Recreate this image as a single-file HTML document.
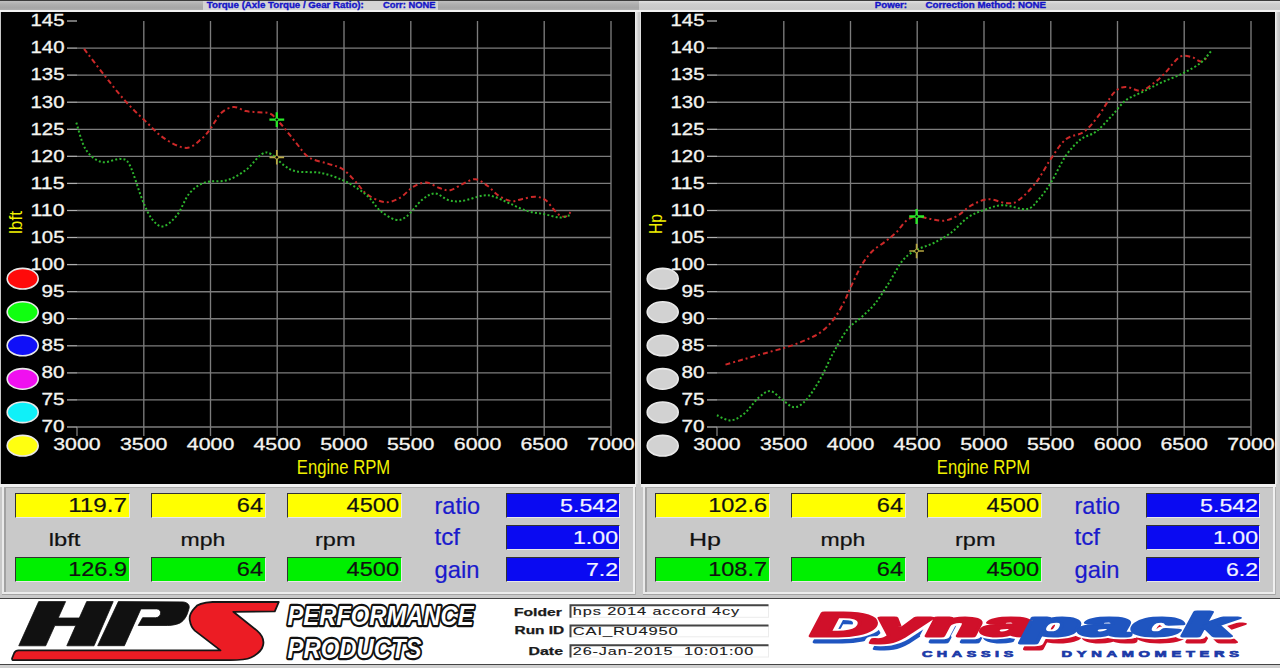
<!DOCTYPE html>
<html><head><meta charset="utf-8"><style>
*{margin:0;padding:0;box-sizing:border-box}
html,body{width:1280px;height:668px;overflow:hidden;background:#c8c8c8;font-family:"Liberation Sans",sans-serif}
.abs{position:absolute}
.pan{position:absolute;top:484px;width:638px;height:114px;background:#cbcbcb;border-top:2px solid #f4f4f4;border-left:2px solid #f0f0f0;}
.pan::before{content:"";position:absolute;left:1px;top:1px;right:3px;bottom:3px;border:1px solid #9c9c9c;border-right-color:#f4f4f4;border-bottom-color:#f4f4f4}
.box{position:absolute;width:115px;height:25px;border-top:1px solid #333;border-left:1px solid #333;border-right:1px solid #e8e8e8;border-bottom:1px solid #e8e8e8}
.yel{background:#ffff00}
.grn{background:#00f000}
.blu{background:#0a0af2;border-top:1px solid #333;border-left:1px solid #333;border-right:1px solid #e8e8e8;border-bottom:1px solid #e8e8e8;position:absolute;width:114px;height:25px}
</style></head><body>
<div class="abs" style="left:0;top:0;width:1280px;height:668px">
<!-- top bar -->
<div class="abs" style="left:0;top:0;width:1280px;height:1px;background:#3c3c3c"></div>
<div class="abs" style="left:0;top:1px;width:639px;height:10px;background:linear-gradient(#c0c0c0,#b0b0b0 30%,#a6a6a6 70%,#b4b4b4)"></div>
<div class="abs" style="left:639px;top:1px;width:641px;height:10px;background:linear-gradient(#e0e0e0,#cdcdcd 30%,#c8c8c8 80%,#d0d0d0)"></div>
<div class="abs" style="left:203px;top:1px;width:235px;height:10px;background:#d4d4d4"></div>
<div class="abs" style="left:0;top:10px;width:1280px;height:2px;background:#f2f2f2"></div>
<!-- chart frame -->
<div class="abs" style="left:0;top:12px;width:1px;height:472px;background:#c8c8c8"></div>
<div class="abs" style="left:635px;top:12px;width:6px;height:472px;background:linear-gradient(90deg,#f0f0f0,#d8d8d8 40%,#c4c4c4 70%,#e8e8e8)"></div>
<div class="abs" style="left:1275px;top:12px;width:5px;height:472px;background:linear-gradient(90deg,#f4f4f4,#d0d0d0 50%,#c0c0c0)"></div>
<div class="abs" style="left:0px;top:484px;width:641px;height:114px;background:#c9c9c9"></div>
<div class="abs" style="left:0px;top:484px;width:636px;height:3px;background:#f0f0f0"></div>
<div class="abs" style="left:2px;top:487px;width:2px;height:107px;background:#ebebeb"></div>
<div class="abs" style="left:4px;top:487px;width:2px;height:105px;background:#a2a2a2"></div>
<div class="abs" style="left:4px;top:487px;width:630px;height:1px;background:#ababab"></div>
<div class="abs" style="left:4px;top:592px;width:630px;height:2px;background:#ececec"></div>
<div class="abs" style="left:2px;top:594px;width:634px;height:1px;background:#a4a4a4"></div>
<div class="abs" style="left:633px;top:487px;width:2px;height:107px;background:#f0f0f0"></div>
<div class="abs" style="left:635px;top:487px;width:1px;height:108px;background:#b0b0b0"></div>
<div class="box yel" style="left:15px;top:493px"></div>
<div class="box grn" style="left:15px;top:557px"></div>
<div class="box yel" style="left:151px;top:493px"></div>
<div class="box grn" style="left:151px;top:557px"></div>
<div class="box yel" style="left:287px;top:493px"></div>
<div class="box grn" style="left:287px;top:557px"></div>
<div class="abs" style="left:640px;top:484px;width:640px;height:114px;background:#c9c9c9"></div>
<div class="abs" style="left:641px;top:484px;width:635px;height:3px;background:#f0f0f0"></div>
<div class="abs" style="left:643px;top:487px;width:2px;height:107px;background:#ebebeb"></div>
<div class="abs" style="left:645px;top:487px;width:2px;height:105px;background:#a2a2a2"></div>
<div class="abs" style="left:645px;top:487px;width:629px;height:1px;background:#ababab"></div>
<div class="abs" style="left:645px;top:592px;width:629px;height:2px;background:#ececec"></div>
<div class="abs" style="left:643px;top:594px;width:633px;height:1px;background:#a4a4a4"></div>
<div class="abs" style="left:1273px;top:487px;width:2px;height:107px;background:#f0f0f0"></div>
<div class="abs" style="left:1275px;top:487px;width:1px;height:108px;background:#b0b0b0"></div>
<div class="box yel" style="left:655px;top:493px"></div>
<div class="box grn" style="left:655px;top:557px"></div>
<div class="box yel" style="left:791px;top:493px"></div>
<div class="box grn" style="left:791px;top:557px"></div>
<div class="box yel" style="left:927px;top:493px"></div>
<div class="box grn" style="left:927px;top:557px"></div>
<div class="blu" style="left:506px;top:493px"></div>
<div class="blu" style="left:506px;top:525px"></div>
<div class="blu" style="left:506px;top:557px"></div>
<div class="blu" style="left:1146px;top:493px"></div>
<div class="blu" style="left:1146px;top:525px"></div>
<div class="blu" style="left:1146px;top:557px"></div>
<!-- bottom strip -->
<div class="abs" style="left:0;top:598px;width:1280px;height:1px;background:#444"></div>
<div class="abs" style="left:0;top:599px;width:1280px;height:65px;background:#fff"></div>
<div class="abs" style="left:0;top:664px;width:1280px;height:1px;background:#444"></div>
<div class="abs" style="left:0;top:665px;width:1280px;height:3px;background:#d0d0d0"></div>
</div>
<svg class="abs" style="left:0;top:0" width="1280" height="668" viewBox="0 0 1280 668">
<text x="206.8" y="8" font-family="Liberation Sans, sans-serif" font-size="9" font-weight="bold" fill="#1414c8" stroke="#1414c8" stroke-width="0.35" textLength="157" lengthAdjust="spacingAndGlyphs">Torque (Axle Torque / Gear Ratio):</text>
<text x="383" y="8" font-family="Liberation Sans, sans-serif" font-size="9" font-weight="bold" fill="#1414c8" stroke="#1414c8" stroke-width="0.35" textLength="52.4" lengthAdjust="spacingAndGlyphs">Corr: NONE</text>
<text x="874.8" y="8" font-family="Liberation Sans, sans-serif" font-size="9" font-weight="bold" fill="#1414c8" stroke="#1414c8" stroke-width="0.35" textLength="32.2" lengthAdjust="spacingAndGlyphs">Power:</text>
<text x="925.6" y="8" font-family="Liberation Sans, sans-serif" font-size="9" font-weight="bold" fill="#1414c8" stroke="#1414c8" stroke-width="0.35" textLength="120.4" lengthAdjust="spacingAndGlyphs">Correction Method: NONE</text>
<rect x="1" y="12" width="634" height="472" fill="#000"/>
<line x1="77" y1="427.0" x2="611.0" y2="427.0" stroke="#7c7c7c" stroke-width="1.35"/>
<line x1="77" y1="399.9" x2="611.0" y2="399.9" stroke="#7c7c7c" stroke-width="1.35"/>
<line x1="77" y1="372.9" x2="611.0" y2="372.9" stroke="#7c7c7c" stroke-width="1.35"/>
<line x1="77" y1="345.8" x2="611.0" y2="345.8" stroke="#7c7c7c" stroke-width="1.35"/>
<line x1="77" y1="318.7" x2="611.0" y2="318.7" stroke="#7c7c7c" stroke-width="1.35"/>
<line x1="77" y1="291.7" x2="611.0" y2="291.7" stroke="#7c7c7c" stroke-width="1.35"/>
<line x1="77" y1="264.6" x2="611.0" y2="264.6" stroke="#7c7c7c" stroke-width="1.35"/>
<line x1="77" y1="237.5" x2="611.0" y2="237.5" stroke="#7c7c7c" stroke-width="1.35"/>
<line x1="77" y1="210.5" x2="611.0" y2="210.5" stroke="#7c7c7c" stroke-width="1.35"/>
<line x1="77" y1="183.4" x2="611.0" y2="183.4" stroke="#7c7c7c" stroke-width="1.35"/>
<line x1="77" y1="156.3" x2="611.0" y2="156.3" stroke="#7c7c7c" stroke-width="1.35"/>
<line x1="77" y1="129.3" x2="611.0" y2="129.3" stroke="#7c7c7c" stroke-width="1.35"/>
<line x1="77" y1="102.2" x2="611.0" y2="102.2" stroke="#7c7c7c" stroke-width="1.35"/>
<line x1="77" y1="75.1" x2="611.0" y2="75.1" stroke="#7c7c7c" stroke-width="1.35"/>
<line x1="77" y1="48.1" x2="611.0" y2="48.1" stroke="#7c7c7c" stroke-width="1.35"/>
<line x1="143.8" y1="21.0" x2="143.8" y2="436.0" stroke="#7c7c7c" stroke-width="1.35"/>
<line x1="210.5" y1="21.0" x2="210.5" y2="436.0" stroke="#7c7c7c" stroke-width="1.35"/>
<line x1="277.2" y1="21.0" x2="277.2" y2="436.0" stroke="#7c7c7c" stroke-width="1.35"/>
<line x1="344.0" y1="21.0" x2="344.0" y2="436.0" stroke="#7c7c7c" stroke-width="1.35"/>
<line x1="410.8" y1="21.0" x2="410.8" y2="436.0" stroke="#7c7c7c" stroke-width="1.35"/>
<line x1="477.5" y1="21.0" x2="477.5" y2="436.0" stroke="#7c7c7c" stroke-width="1.35"/>
<line x1="544.2" y1="21.0" x2="544.2" y2="436.0" stroke="#7c7c7c" stroke-width="1.35"/>
<line x1="611.0" y1="21.0" x2="611.0" y2="436.0" stroke="#7c7c7c" stroke-width="1.35"/>
<line x1="77" y1="427" x2="77" y2="436.0" stroke="#7c7c7c" stroke-width="1.35"/>
<line x1="67" y1="427.0" x2="77" y2="427.0" stroke="#b0b0b0" stroke-width="1.3"/>
<text x="41.5" y="432.3" font-family="Liberation Sans, sans-serif" font-size="15.6" fill="#f4f4f0" stroke="#f4f4f0" stroke-width="0.3" textLength="23" lengthAdjust="spacingAndGlyphs">70</text>
<line x1="67" y1="399.9" x2="77" y2="399.9" stroke="#b0b0b0" stroke-width="1.3"/>
<text x="41.5" y="405.2" font-family="Liberation Sans, sans-serif" font-size="15.6" fill="#f4f4f0" stroke="#f4f4f0" stroke-width="0.3" textLength="23" lengthAdjust="spacingAndGlyphs">75</text>
<line x1="67" y1="372.9" x2="77" y2="372.9" stroke="#b0b0b0" stroke-width="1.3"/>
<text x="41.5" y="378.2" font-family="Liberation Sans, sans-serif" font-size="15.6" fill="#f4f4f0" stroke="#f4f4f0" stroke-width="0.3" textLength="23" lengthAdjust="spacingAndGlyphs">80</text>
<line x1="67" y1="345.8" x2="77" y2="345.8" stroke="#b0b0b0" stroke-width="1.3"/>
<text x="41.5" y="351.1" font-family="Liberation Sans, sans-serif" font-size="15.6" fill="#f4f4f0" stroke="#f4f4f0" stroke-width="0.3" textLength="23" lengthAdjust="spacingAndGlyphs">85</text>
<line x1="67" y1="318.7" x2="77" y2="318.7" stroke="#b0b0b0" stroke-width="1.3"/>
<text x="41.5" y="324.0" font-family="Liberation Sans, sans-serif" font-size="15.6" fill="#f4f4f0" stroke="#f4f4f0" stroke-width="0.3" textLength="23" lengthAdjust="spacingAndGlyphs">90</text>
<line x1="67" y1="291.7" x2="77" y2="291.7" stroke="#b0b0b0" stroke-width="1.3"/>
<text x="41.5" y="297.0" font-family="Liberation Sans, sans-serif" font-size="15.6" fill="#f4f4f0" stroke="#f4f4f0" stroke-width="0.3" textLength="23" lengthAdjust="spacingAndGlyphs">95</text>
<line x1="67" y1="264.6" x2="77" y2="264.6" stroke="#b0b0b0" stroke-width="1.3"/>
<text x="30.5" y="269.9" font-family="Liberation Sans, sans-serif" font-size="15.6" fill="#f4f4f0" stroke="#f4f4f0" stroke-width="0.3" textLength="34" lengthAdjust="spacingAndGlyphs">100</text>
<line x1="67" y1="237.5" x2="77" y2="237.5" stroke="#b0b0b0" stroke-width="1.3"/>
<text x="30.5" y="242.8" font-family="Liberation Sans, sans-serif" font-size="15.6" fill="#f4f4f0" stroke="#f4f4f0" stroke-width="0.3" textLength="34" lengthAdjust="spacingAndGlyphs">105</text>
<line x1="67" y1="210.5" x2="77" y2="210.5" stroke="#b0b0b0" stroke-width="1.3"/>
<text x="30.5" y="215.8" font-family="Liberation Sans, sans-serif" font-size="15.6" fill="#f4f4f0" stroke="#f4f4f0" stroke-width="0.3" textLength="34" lengthAdjust="spacingAndGlyphs">110</text>
<line x1="67" y1="183.4" x2="77" y2="183.4" stroke="#b0b0b0" stroke-width="1.3"/>
<text x="30.5" y="188.7" font-family="Liberation Sans, sans-serif" font-size="15.6" fill="#f4f4f0" stroke="#f4f4f0" stroke-width="0.3" textLength="34" lengthAdjust="spacingAndGlyphs">115</text>
<line x1="67" y1="156.3" x2="77" y2="156.3" stroke="#b0b0b0" stroke-width="1.3"/>
<text x="30.5" y="161.6" font-family="Liberation Sans, sans-serif" font-size="15.6" fill="#f4f4f0" stroke="#f4f4f0" stroke-width="0.3" textLength="34" lengthAdjust="spacingAndGlyphs">120</text>
<line x1="67" y1="129.3" x2="77" y2="129.3" stroke="#b0b0b0" stroke-width="1.3"/>
<text x="30.5" y="134.6" font-family="Liberation Sans, sans-serif" font-size="15.6" fill="#f4f4f0" stroke="#f4f4f0" stroke-width="0.3" textLength="34" lengthAdjust="spacingAndGlyphs">125</text>
<line x1="67" y1="102.2" x2="77" y2="102.2" stroke="#b0b0b0" stroke-width="1.3"/>
<text x="30.5" y="107.5" font-family="Liberation Sans, sans-serif" font-size="15.6" fill="#f4f4f0" stroke="#f4f4f0" stroke-width="0.3" textLength="34" lengthAdjust="spacingAndGlyphs">130</text>
<line x1="67" y1="75.1" x2="77" y2="75.1" stroke="#b0b0b0" stroke-width="1.3"/>
<text x="30.5" y="80.4" font-family="Liberation Sans, sans-serif" font-size="15.6" fill="#f4f4f0" stroke="#f4f4f0" stroke-width="0.3" textLength="34" lengthAdjust="spacingAndGlyphs">135</text>
<line x1="67" y1="48.1" x2="77" y2="48.1" stroke="#b0b0b0" stroke-width="1.3"/>
<text x="30.5" y="53.4" font-family="Liberation Sans, sans-serif" font-size="15.6" fill="#f4f4f0" stroke="#f4f4f0" stroke-width="0.3" textLength="34" lengthAdjust="spacingAndGlyphs">140</text>
<line x1="67" y1="21.0" x2="77" y2="21.0" stroke="#b0b0b0" stroke-width="1.3"/>
<text x="30.5" y="26.3" font-family="Liberation Sans, sans-serif" font-size="15.6" fill="#f4f4f0" stroke="#f4f4f0" stroke-width="0.3" textLength="34" lengthAdjust="spacingAndGlyphs">145</text>
<text x="53.2" y="449.7" font-family="Liberation Sans, sans-serif" font-size="16.6" fill="#f4f4f0" stroke="#f4f4f0" stroke-width="0.3" textLength="47.5" lengthAdjust="spacingAndGlyphs">3000</text>
<text x="120.0" y="449.7" font-family="Liberation Sans, sans-serif" font-size="16.6" fill="#f4f4f0" stroke="#f4f4f0" stroke-width="0.3" textLength="47.5" lengthAdjust="spacingAndGlyphs">3500</text>
<text x="186.8" y="449.7" font-family="Liberation Sans, sans-serif" font-size="16.6" fill="#f4f4f0" stroke="#f4f4f0" stroke-width="0.3" textLength="47.5" lengthAdjust="spacingAndGlyphs">4000</text>
<text x="253.5" y="449.7" font-family="Liberation Sans, sans-serif" font-size="16.6" fill="#f4f4f0" stroke="#f4f4f0" stroke-width="0.3" textLength="47.5" lengthAdjust="spacingAndGlyphs">4500</text>
<text x="320.2" y="449.7" font-family="Liberation Sans, sans-serif" font-size="16.6" fill="#f4f4f0" stroke="#f4f4f0" stroke-width="0.3" textLength="47.5" lengthAdjust="spacingAndGlyphs">5000</text>
<text x="387.0" y="449.7" font-family="Liberation Sans, sans-serif" font-size="16.6" fill="#f4f4f0" stroke="#f4f4f0" stroke-width="0.3" textLength="47.5" lengthAdjust="spacingAndGlyphs">5500</text>
<text x="453.8" y="449.7" font-family="Liberation Sans, sans-serif" font-size="16.6" fill="#f4f4f0" stroke="#f4f4f0" stroke-width="0.3" textLength="47.5" lengthAdjust="spacingAndGlyphs">6000</text>
<text x="520.5" y="449.7" font-family="Liberation Sans, sans-serif" font-size="16.6" fill="#f4f4f0" stroke="#f4f4f0" stroke-width="0.3" textLength="47.5" lengthAdjust="spacingAndGlyphs">6500</text>
<text x="587.2" y="449.7" font-family="Liberation Sans, sans-serif" font-size="16.6" fill="#f4f4f0" stroke="#f4f4f0" stroke-width="0.3" textLength="47.5" lengthAdjust="spacingAndGlyphs">7000</text>
<text x="296.8" y="474.4" font-family="Liberation Sans, sans-serif" font-size="19.6" fill="#f0f000" textLength="93.4" lengthAdjust="spacingAndGlyphs">Engine RPM</text>
<text transform="translate(22,234) rotate(-90)" x="0" y="0" font-family="Liberation Sans, sans-serif" font-size="18" fill="#f0f000" textLength="23" lengthAdjust="spacingAndGlyphs">lbft</text>
<path d="M84.1,48.9 C87.5,53.3 97.8,67.0 104.6,75.6 C111.4,84.2 118.2,93.1 125.0,100.7 C131.8,108.3 138.8,114.8 145.4,121.1 C152.0,127.4 157.5,133.9 164.3,138.4 C171.1,142.9 180.0,147.9 186.3,147.9 C192.6,147.9 197.8,141.8 202.0,138.4 C206.2,135.0 208.3,131.6 211.4,127.4 C214.5,123.2 217.1,116.7 220.8,113.3 C224.5,109.9 229.2,107.4 233.4,107.0 C237.6,106.6 241.8,110.2 246.0,111.1 C250.2,112.0 254.4,111.8 258.6,112.3 C262.8,112.8 266.9,111.7 271.1,114.2 C275.3,116.7 279.5,122.6 283.7,127.4 C287.9,132.2 292.1,138.1 296.3,143.1 C300.5,148.1 303.6,153.9 308.8,157.3 C314.0,160.7 322.0,161.6 327.7,163.6 C333.4,165.6 338.3,166.2 343.1,169.4 C347.9,172.6 352.3,178.3 356.3,182.5 C360.3,186.7 362.5,191.2 367.2,194.5 C371.9,197.8 379.2,201.6 384.7,202.2 C390.2,202.8 395.3,200.4 400.0,197.8 C404.7,195.2 408.7,189.5 413.1,186.9 C417.5,184.3 421.9,182.3 426.3,182.5 C430.7,182.7 435.4,186.7 439.4,188.0 C443.4,189.3 446.3,190.9 450.3,190.2 C454.3,189.5 459.2,185.4 463.4,183.6 C467.6,181.8 471.5,178.8 475.5,179.2 C479.5,179.6 483.7,183.1 487.5,185.8 C491.3,188.5 494.5,193.1 498.5,195.6 C502.5,198.1 507.6,200.5 511.6,201.1 C515.6,201.7 518.5,199.6 522.5,198.9 C526.5,198.2 531.8,196.5 535.6,196.7 C539.4,196.9 542.6,198.0 545.5,200.0 C548.4,202.0 550.7,206.2 553.1,208.8 C555.5,211.4 557.5,214.0 559.7,215.3 C561.9,216.6 564.5,217.0 566.3,216.4 C568.1,215.8 569.9,212.7 570.6,212.0" fill="none" stroke="#cc2828" stroke-width="2" stroke-dasharray="5 3 2 3"/>
<path d="M76.3,122.7 C77.9,127.2 81.5,142.8 85.7,149.4 C89.9,156.0 95.6,160.4 101.4,162.0 C107.2,163.6 115.6,158.4 120.3,158.9 C125.0,159.4 126.0,158.3 129.7,165.1 C133.4,171.9 138.6,190.8 142.3,199.7 C146.0,208.6 148.3,214.1 151.7,218.6 C155.1,223.1 158.5,226.9 162.7,226.4 C166.9,225.9 172.4,220.9 176.9,215.4 C181.4,209.9 184.7,198.9 189.4,193.4 C194.1,187.9 198.8,184.6 205.1,182.4 C211.4,180.2 220.3,182.3 227.1,180.2 C233.9,178.1 240.2,174.2 246.0,169.9 C251.8,165.6 257.5,156.7 261.7,154.1 C265.9,151.5 267.4,152.3 271.1,154.1 C274.8,155.9 279.5,162.2 283.7,165.1 C287.9,168.0 290.0,170.1 296.3,171.4 C302.6,172.7 313.6,171.5 321.4,173.0 C329.2,174.5 336.9,177.6 343.1,180.3 C349.3,183.0 354.0,186.2 358.4,189.1 C362.8,192.0 365.8,194.2 369.4,197.8 C373.0,201.4 375.9,207.2 380.3,210.9 C384.7,214.6 391.2,218.8 395.6,219.7 C400.0,220.6 402.2,219.7 406.6,216.4 C411.0,213.1 417.2,203.8 421.9,200.0 C426.6,196.2 430.6,193.4 435.0,193.4 C439.4,193.4 443.7,198.7 448.1,200.0 C452.5,201.3 455.5,201.8 461.3,201.1 C467.1,200.4 477.6,196.3 483.1,195.6 C488.6,194.9 489.7,195.4 494.1,196.7 C498.5,198.0 503.9,200.9 509.4,203.3 C514.9,205.7 521.1,209.1 526.9,210.9 C532.7,212.7 538.9,213.1 544.4,214.2 C549.9,215.3 555.5,217.3 559.7,217.5 C563.9,217.7 568.0,215.7 569.6,215.3" fill="none" stroke="#2cb42c" stroke-width="2" stroke-dasharray="2 2.2"/>
<path d="M269.40000000000003,119.6H284.2M276.8,112.19999999999999V127.0" stroke="#28e828" stroke-width="2.3"/>
<path d="M269.5,157.3H284.1M276.8,150.0V164.60000000000002" stroke="#b8a840" stroke-width="1.7"/>
<circle cx="276.8" cy="157.3" r="1.8" fill="#000" stroke="#b8a840" stroke-width="1"/>
<circle cx="276.8" cy="119.6" r="1.6" fill="#000" stroke="#30e030" stroke-width="1"/>
<rect x="641" y="12" width="634" height="472" fill="#000"/>
<line x1="717" y1="427.0" x2="1251.0" y2="427.0" stroke="#7c7c7c" stroke-width="1.35"/>
<line x1="717" y1="399.9" x2="1251.0" y2="399.9" stroke="#7c7c7c" stroke-width="1.35"/>
<line x1="717" y1="372.9" x2="1251.0" y2="372.9" stroke="#7c7c7c" stroke-width="1.35"/>
<line x1="717" y1="345.8" x2="1251.0" y2="345.8" stroke="#7c7c7c" stroke-width="1.35"/>
<line x1="717" y1="318.7" x2="1251.0" y2="318.7" stroke="#7c7c7c" stroke-width="1.35"/>
<line x1="717" y1="291.7" x2="1251.0" y2="291.7" stroke="#7c7c7c" stroke-width="1.35"/>
<line x1="717" y1="264.6" x2="1251.0" y2="264.6" stroke="#7c7c7c" stroke-width="1.35"/>
<line x1="717" y1="237.5" x2="1251.0" y2="237.5" stroke="#7c7c7c" stroke-width="1.35"/>
<line x1="717" y1="210.5" x2="1251.0" y2="210.5" stroke="#7c7c7c" stroke-width="1.35"/>
<line x1="717" y1="183.4" x2="1251.0" y2="183.4" stroke="#7c7c7c" stroke-width="1.35"/>
<line x1="717" y1="156.3" x2="1251.0" y2="156.3" stroke="#7c7c7c" stroke-width="1.35"/>
<line x1="717" y1="129.3" x2="1251.0" y2="129.3" stroke="#7c7c7c" stroke-width="1.35"/>
<line x1="717" y1="102.2" x2="1251.0" y2="102.2" stroke="#7c7c7c" stroke-width="1.35"/>
<line x1="717" y1="75.1" x2="1251.0" y2="75.1" stroke="#7c7c7c" stroke-width="1.35"/>
<line x1="717" y1="48.1" x2="1251.0" y2="48.1" stroke="#7c7c7c" stroke-width="1.35"/>
<line x1="783.8" y1="21.0" x2="783.8" y2="436.0" stroke="#7c7c7c" stroke-width="1.35"/>
<line x1="850.5" y1="21.0" x2="850.5" y2="436.0" stroke="#7c7c7c" stroke-width="1.35"/>
<line x1="917.2" y1="21.0" x2="917.2" y2="436.0" stroke="#7c7c7c" stroke-width="1.35"/>
<line x1="984.0" y1="21.0" x2="984.0" y2="436.0" stroke="#7c7c7c" stroke-width="1.35"/>
<line x1="1050.8" y1="21.0" x2="1050.8" y2="436.0" stroke="#7c7c7c" stroke-width="1.35"/>
<line x1="1117.5" y1="21.0" x2="1117.5" y2="436.0" stroke="#7c7c7c" stroke-width="1.35"/>
<line x1="1184.2" y1="21.0" x2="1184.2" y2="436.0" stroke="#7c7c7c" stroke-width="1.35"/>
<line x1="1251.0" y1="21.0" x2="1251.0" y2="436.0" stroke="#7c7c7c" stroke-width="1.35"/>
<line x1="717" y1="427" x2="717" y2="436.0" stroke="#7c7c7c" stroke-width="1.35"/>
<line x1="707" y1="427.0" x2="717" y2="427.0" stroke="#b0b0b0" stroke-width="1.3"/>
<text x="681.5" y="432.3" font-family="Liberation Sans, sans-serif" font-size="15.6" fill="#f4f4f0" stroke="#f4f4f0" stroke-width="0.3" textLength="23" lengthAdjust="spacingAndGlyphs">70</text>
<line x1="707" y1="399.9" x2="717" y2="399.9" stroke="#b0b0b0" stroke-width="1.3"/>
<text x="681.5" y="405.2" font-family="Liberation Sans, sans-serif" font-size="15.6" fill="#f4f4f0" stroke="#f4f4f0" stroke-width="0.3" textLength="23" lengthAdjust="spacingAndGlyphs">75</text>
<line x1="707" y1="372.9" x2="717" y2="372.9" stroke="#b0b0b0" stroke-width="1.3"/>
<text x="681.5" y="378.2" font-family="Liberation Sans, sans-serif" font-size="15.6" fill="#f4f4f0" stroke="#f4f4f0" stroke-width="0.3" textLength="23" lengthAdjust="spacingAndGlyphs">80</text>
<line x1="707" y1="345.8" x2="717" y2="345.8" stroke="#b0b0b0" stroke-width="1.3"/>
<text x="681.5" y="351.1" font-family="Liberation Sans, sans-serif" font-size="15.6" fill="#f4f4f0" stroke="#f4f4f0" stroke-width="0.3" textLength="23" lengthAdjust="spacingAndGlyphs">85</text>
<line x1="707" y1="318.7" x2="717" y2="318.7" stroke="#b0b0b0" stroke-width="1.3"/>
<text x="681.5" y="324.0" font-family="Liberation Sans, sans-serif" font-size="15.6" fill="#f4f4f0" stroke="#f4f4f0" stroke-width="0.3" textLength="23" lengthAdjust="spacingAndGlyphs">90</text>
<line x1="707" y1="291.7" x2="717" y2="291.7" stroke="#b0b0b0" stroke-width="1.3"/>
<text x="681.5" y="297.0" font-family="Liberation Sans, sans-serif" font-size="15.6" fill="#f4f4f0" stroke="#f4f4f0" stroke-width="0.3" textLength="23" lengthAdjust="spacingAndGlyphs">95</text>
<line x1="707" y1="264.6" x2="717" y2="264.6" stroke="#b0b0b0" stroke-width="1.3"/>
<text x="670.5" y="269.9" font-family="Liberation Sans, sans-serif" font-size="15.6" fill="#f4f4f0" stroke="#f4f4f0" stroke-width="0.3" textLength="34" lengthAdjust="spacingAndGlyphs">100</text>
<line x1="707" y1="237.5" x2="717" y2="237.5" stroke="#b0b0b0" stroke-width="1.3"/>
<text x="670.5" y="242.8" font-family="Liberation Sans, sans-serif" font-size="15.6" fill="#f4f4f0" stroke="#f4f4f0" stroke-width="0.3" textLength="34" lengthAdjust="spacingAndGlyphs">105</text>
<line x1="707" y1="210.5" x2="717" y2="210.5" stroke="#b0b0b0" stroke-width="1.3"/>
<text x="670.5" y="215.8" font-family="Liberation Sans, sans-serif" font-size="15.6" fill="#f4f4f0" stroke="#f4f4f0" stroke-width="0.3" textLength="34" lengthAdjust="spacingAndGlyphs">110</text>
<line x1="707" y1="183.4" x2="717" y2="183.4" stroke="#b0b0b0" stroke-width="1.3"/>
<text x="670.5" y="188.7" font-family="Liberation Sans, sans-serif" font-size="15.6" fill="#f4f4f0" stroke="#f4f4f0" stroke-width="0.3" textLength="34" lengthAdjust="spacingAndGlyphs">115</text>
<line x1="707" y1="156.3" x2="717" y2="156.3" stroke="#b0b0b0" stroke-width="1.3"/>
<text x="670.5" y="161.6" font-family="Liberation Sans, sans-serif" font-size="15.6" fill="#f4f4f0" stroke="#f4f4f0" stroke-width="0.3" textLength="34" lengthAdjust="spacingAndGlyphs">120</text>
<line x1="707" y1="129.3" x2="717" y2="129.3" stroke="#b0b0b0" stroke-width="1.3"/>
<text x="670.5" y="134.6" font-family="Liberation Sans, sans-serif" font-size="15.6" fill="#f4f4f0" stroke="#f4f4f0" stroke-width="0.3" textLength="34" lengthAdjust="spacingAndGlyphs">125</text>
<line x1="707" y1="102.2" x2="717" y2="102.2" stroke="#b0b0b0" stroke-width="1.3"/>
<text x="670.5" y="107.5" font-family="Liberation Sans, sans-serif" font-size="15.6" fill="#f4f4f0" stroke="#f4f4f0" stroke-width="0.3" textLength="34" lengthAdjust="spacingAndGlyphs">130</text>
<line x1="707" y1="75.1" x2="717" y2="75.1" stroke="#b0b0b0" stroke-width="1.3"/>
<text x="670.5" y="80.4" font-family="Liberation Sans, sans-serif" font-size="15.6" fill="#f4f4f0" stroke="#f4f4f0" stroke-width="0.3" textLength="34" lengthAdjust="spacingAndGlyphs">135</text>
<line x1="707" y1="48.1" x2="717" y2="48.1" stroke="#b0b0b0" stroke-width="1.3"/>
<text x="670.5" y="53.4" font-family="Liberation Sans, sans-serif" font-size="15.6" fill="#f4f4f0" stroke="#f4f4f0" stroke-width="0.3" textLength="34" lengthAdjust="spacingAndGlyphs">140</text>
<line x1="707" y1="21.0" x2="717" y2="21.0" stroke="#b0b0b0" stroke-width="1.3"/>
<text x="670.5" y="26.3" font-family="Liberation Sans, sans-serif" font-size="15.6" fill="#f4f4f0" stroke="#f4f4f0" stroke-width="0.3" textLength="34" lengthAdjust="spacingAndGlyphs">145</text>
<text x="693.2" y="449.7" font-family="Liberation Sans, sans-serif" font-size="16.6" fill="#f4f4f0" stroke="#f4f4f0" stroke-width="0.3" textLength="47.5" lengthAdjust="spacingAndGlyphs">3000</text>
<text x="760.0" y="449.7" font-family="Liberation Sans, sans-serif" font-size="16.6" fill="#f4f4f0" stroke="#f4f4f0" stroke-width="0.3" textLength="47.5" lengthAdjust="spacingAndGlyphs">3500</text>
<text x="826.8" y="449.7" font-family="Liberation Sans, sans-serif" font-size="16.6" fill="#f4f4f0" stroke="#f4f4f0" stroke-width="0.3" textLength="47.5" lengthAdjust="spacingAndGlyphs">4000</text>
<text x="893.5" y="449.7" font-family="Liberation Sans, sans-serif" font-size="16.6" fill="#f4f4f0" stroke="#f4f4f0" stroke-width="0.3" textLength="47.5" lengthAdjust="spacingAndGlyphs">4500</text>
<text x="960.2" y="449.7" font-family="Liberation Sans, sans-serif" font-size="16.6" fill="#f4f4f0" stroke="#f4f4f0" stroke-width="0.3" textLength="47.5" lengthAdjust="spacingAndGlyphs">5000</text>
<text x="1027.0" y="449.7" font-family="Liberation Sans, sans-serif" font-size="16.6" fill="#f4f4f0" stroke="#f4f4f0" stroke-width="0.3" textLength="47.5" lengthAdjust="spacingAndGlyphs">5500</text>
<text x="1093.8" y="449.7" font-family="Liberation Sans, sans-serif" font-size="16.6" fill="#f4f4f0" stroke="#f4f4f0" stroke-width="0.3" textLength="47.5" lengthAdjust="spacingAndGlyphs">6000</text>
<text x="1160.5" y="449.7" font-family="Liberation Sans, sans-serif" font-size="16.6" fill="#f4f4f0" stroke="#f4f4f0" stroke-width="0.3" textLength="47.5" lengthAdjust="spacingAndGlyphs">6500</text>
<text x="1227.2" y="449.7" font-family="Liberation Sans, sans-serif" font-size="16.6" fill="#f4f4f0" stroke="#f4f4f0" stroke-width="0.3" textLength="47.5" lengthAdjust="spacingAndGlyphs">7000</text>
<text x="936.8" y="474.4" font-family="Liberation Sans, sans-serif" font-size="19.6" fill="#f0f000" textLength="93.4" lengthAdjust="spacingAndGlyphs">Engine RPM</text>
<text transform="translate(662,234) rotate(-90)" x="0" y="0" font-family="Liberation Sans, sans-serif" font-size="18" fill="#f0f000" textLength="20" lengthAdjust="spacingAndGlyphs">Hp</text>
<path d="M725.5,364.6 C728.6,363.7 737.8,361.0 744.4,359.1 C751.0,357.2 758.2,355.1 765.1,353.2 C772.0,351.2 779.5,349.4 785.8,347.4 C792.1,345.4 797.3,343.7 803.0,341.2 C808.7,338.7 815.0,336.3 820.2,332.6 C825.4,328.9 830.0,324.0 834.0,318.8 C838.0,313.6 841.4,307.1 844.3,301.6 C847.2,296.2 848.3,292.1 851.2,286.1 C854.1,280.1 858.1,271.1 861.5,265.4 C864.9,259.7 867.8,255.7 871.8,251.7 C875.8,247.7 881.6,244.5 885.6,241.3 C889.6,238.1 892.5,236.1 896.0,232.7 C899.5,229.3 902.9,223.4 906.3,220.7 C909.7,218.0 912.6,216.8 916.6,216.5 C920.6,216.2 925.8,218.2 930.4,218.9 C935.0,219.6 939.6,221.3 944.2,220.7 C948.8,220.1 953.3,218.1 957.9,215.5 C962.5,212.9 966.7,207.9 971.7,205.2 C976.7,202.5 982.3,199.5 988.0,199.2 C993.7,198.8 1000.9,202.8 1005.9,203.1 C1010.9,203.3 1012.9,204.1 1017.9,200.7 C1022.9,197.3 1030.4,189.7 1035.9,182.7 C1041.4,175.7 1045.9,166.0 1050.9,158.8 C1055.9,151.6 1060.3,143.8 1065.8,139.3 C1071.3,134.8 1078.3,135.8 1083.8,131.8 C1089.3,127.8 1093.8,121.9 1098.8,115.4 C1103.8,108.9 1109.3,97.7 1113.8,92.9 C1118.3,88.2 1121.2,87.2 1125.7,86.9 C1130.2,86.6 1136.2,91.3 1140.7,90.8 C1145.2,90.3 1148.7,86.8 1152.7,83.9 C1156.7,81.0 1160.2,77.9 1164.7,73.4 C1169.2,68.9 1175.1,59.7 1179.6,57.0 C1184.1,54.3 1188.1,56.3 1191.6,57.0 C1195.1,57.7 1197.8,61.4 1200.6,61.4 C1203.3,61.4 1206.8,57.7 1208.1,57.0" fill="none" stroke="#cc2828" stroke-width="2" stroke-dasharray="5 3 2 3"/>
<path d="M716.9,415.2 C719.2,416.1 726.1,420.7 730.7,420.4 C735.3,420.1 739.8,417.2 744.4,413.5 C749.0,409.8 753.9,401.7 758.2,398.0 C762.5,394.3 766.3,390.8 770.3,391.1 C774.3,391.4 778.3,397.0 782.3,399.7 C786.3,402.4 790.4,407.3 794.4,407.3 C798.4,407.3 802.1,404.4 806.4,399.7 C810.7,395.0 815.6,387.1 820.2,379.1 C824.8,371.1 829.4,359.8 834.0,351.5 C838.6,343.2 843.1,334.8 847.7,329.1 C852.3,323.4 856.9,321.4 861.5,317.1 C866.1,312.8 870.7,309.1 875.3,303.3 C879.9,297.6 884.5,289.8 889.1,282.6 C893.7,275.4 898.2,265.8 902.8,260.3 C907.4,254.9 911.4,252.8 916.6,249.9 C921.8,247.0 928.1,245.9 933.8,243.0 C939.5,240.1 945.2,237.0 951.0,232.7 C956.8,228.4 962.6,221.0 968.3,217.2 C974.0,213.4 979.2,211.7 985.0,209.7 C990.8,207.7 995.9,205.3 1002.9,205.2 C1009.9,205.1 1020.9,210.1 1026.9,209.1 C1032.9,208.1 1034.9,203.6 1038.9,199.2 C1042.9,194.8 1046.4,189.9 1050.9,182.7 C1055.4,175.5 1060.8,163.0 1065.8,155.8 C1070.8,148.6 1075.8,143.3 1080.8,139.3 C1085.8,135.3 1090.8,135.5 1095.8,131.8 C1100.8,128.1 1105.8,122.1 1110.8,116.9 C1115.8,111.7 1120.2,104.7 1125.7,100.4 C1131.2,96.2 1137.7,94.4 1143.7,91.4 C1149.7,88.4 1155.2,85.4 1161.7,82.4 C1168.2,79.4 1176.1,76.7 1182.6,73.4 C1189.1,70.2 1195.8,66.6 1200.6,62.9 C1205.3,59.2 1209.3,53.0 1211.1,51.0" fill="none" stroke="#2cb42c" stroke-width="2" stroke-dasharray="2 2.2"/>
<path d="M909.2,216.5H924.0M916.6,209.1V223.9" stroke="#28e828" stroke-width="2.3"/>
<path d="M909.3000000000001,251H923.9M916.6,243.7V258.3" stroke="#b8a840" stroke-width="1.7"/>
<circle cx="916.6" cy="251" r="1.8" fill="#000" stroke="#b8a840" stroke-width="1"/>
<circle cx="916.6" cy="216.5" r="1.6" fill="#000" stroke="#30e030" stroke-width="1"/>
<ellipse cx="22.7" cy="278.7" rx="15.5" ry="10.3" fill="#ff0a0a" stroke="#e8e8e8" stroke-width="1.6"/>
<ellipse cx="22.7" cy="312.1" rx="15.5" ry="10.3" fill="#10ff10" stroke="#e8e8e8" stroke-width="1.6"/>
<ellipse cx="22.7" cy="345.5" rx="15.5" ry="10.3" fill="#1010f8" stroke="#e8e8e8" stroke-width="1.6"/>
<ellipse cx="22.7" cy="378.9" rx="15.5" ry="10.3" fill="#f010f0" stroke="#e8e8e8" stroke-width="1.6"/>
<ellipse cx="22.7" cy="412.3" rx="15.5" ry="10.3" fill="#10f0f8" stroke="#e8e8e8" stroke-width="1.6"/>
<ellipse cx="22.7" cy="445.7" rx="15.5" ry="10.3" fill="#ffff10" stroke="#e8e8e8" stroke-width="1.6"/>
<ellipse cx="662.7" cy="278.7" rx="15.5" ry="10.3" fill="#d2d2d2" stroke="#e8e8e8" stroke-width="1.6"/>
<ellipse cx="662.7" cy="312.1" rx="15.5" ry="10.3" fill="#d2d2d2" stroke="#e8e8e8" stroke-width="1.6"/>
<ellipse cx="662.7" cy="345.5" rx="15.5" ry="10.3" fill="#d2d2d2" stroke="#e8e8e8" stroke-width="1.6"/>
<ellipse cx="662.7" cy="378.9" rx="15.5" ry="10.3" fill="#d2d2d2" stroke="#e8e8e8" stroke-width="1.6"/>
<ellipse cx="662.7" cy="412.3" rx="15.5" ry="10.3" fill="#d2d2d2" stroke="#e8e8e8" stroke-width="1.6"/>
<ellipse cx="662.7" cy="445.7" rx="15.5" ry="10.3" fill="#d2d2d2" stroke="#e8e8e8" stroke-width="1.6"/>
<text x="68.2" y="512.2" font-family="Liberation Sans, sans-serif" font-size="19.6" font-weight="normal" fill="#111" stroke="#111" stroke-width="0.2" textLength="58.8" lengthAdjust="spacingAndGlyphs" >119.7</text>
<text x="68.2" y="576.4" font-family="Liberation Sans, sans-serif" font-size="19.6" font-weight="normal" fill="#111" stroke="#111" stroke-width="0.2" textLength="58.8" lengthAdjust="spacingAndGlyphs" >126.9</text>
<text x="236.8" y="512.2" font-family="Liberation Sans, sans-serif" font-size="19.6" font-weight="normal" fill="#111" stroke="#111" stroke-width="0.2" textLength="26.2" lengthAdjust="spacingAndGlyphs" >64</text>
<text x="236.8" y="576.4" font-family="Liberation Sans, sans-serif" font-size="19.6" font-weight="normal" fill="#111" stroke="#111" stroke-width="0.2" textLength="26.2" lengthAdjust="spacingAndGlyphs" >64</text>
<text x="346.6" y="512.2" font-family="Liberation Sans, sans-serif" font-size="19.6" font-weight="normal" fill="#111" stroke="#111" stroke-width="0.2" textLength="52.4" lengthAdjust="spacingAndGlyphs" >4500</text>
<text x="346.6" y="576.4" font-family="Liberation Sans, sans-serif" font-size="19.6" font-weight="normal" fill="#111" stroke="#111" stroke-width="0.2" textLength="52.4" lengthAdjust="spacingAndGlyphs" >4500</text>
<text x="48.8" y="546.4" font-family="Liberation Sans, sans-serif" font-size="18.6" font-weight="normal" fill="#111" stroke="#111" stroke-width="0.2" textLength="31.6" lengthAdjust="spacingAndGlyphs" >lbft</text>
<text x="180.5" y="546.4" font-family="Liberation Sans, sans-serif" font-size="18.6" font-weight="normal" fill="#111" stroke="#111" stroke-width="0.2" textLength="44.8" lengthAdjust="spacingAndGlyphs" >mph</text>
<text x="315.0" y="546.4" font-family="Liberation Sans, sans-serif" font-size="18.6" font-weight="normal" fill="#111" stroke="#111" stroke-width="0.2" textLength="40.5" lengthAdjust="spacingAndGlyphs" >rpm</text>
<text x="434.5" y="513.5" font-family="Liberation Sans, sans-serif" font-size="23.4" font-weight="normal" fill="#1a1acc" stroke="#1a1acc" stroke-width="0.2" textLength="45.7" lengthAdjust="spacingAndGlyphs" >ratio</text>
<text x="434.5" y="544.6" font-family="Liberation Sans, sans-serif" font-size="23.4" font-weight="normal" fill="#1a1acc" stroke="#1a1acc" stroke-width="0.2" textLength="25.5" lengthAdjust="spacingAndGlyphs" >tcf</text>
<text x="434.5" y="577.5" font-family="Liberation Sans, sans-serif" font-size="23.4" font-weight="normal" fill="#1a1acc" stroke="#1a1acc" stroke-width="0.2" textLength="45.0" lengthAdjust="spacingAndGlyphs" >gain</text>
<text x="560.1" y="512.1" font-family="Liberation Sans, sans-serif" font-size="17.9" font-weight="normal" fill="#f4f4ff" stroke="#f4f4ff" stroke-width="0.2" textLength="57.9" lengthAdjust="spacingAndGlyphs" >5.542</text>
<text x="573.0" y="543.6" font-family="Liberation Sans, sans-serif" font-size="17.9" font-weight="normal" fill="#f4f4ff" stroke="#f4f4ff" stroke-width="0.2" textLength="45.0" lengthAdjust="spacingAndGlyphs" >1.00</text>
<text x="585.9" y="576.3" font-family="Liberation Sans, sans-serif" font-size="17.9" font-weight="normal" fill="#f4f4ff" stroke="#f4f4ff" stroke-width="0.2" textLength="32.1" lengthAdjust="spacingAndGlyphs" >7.2</text>
<text x="708.2" y="512.2" font-family="Liberation Sans, sans-serif" font-size="19.6" font-weight="normal" fill="#111" stroke="#111" stroke-width="0.2" textLength="58.8" lengthAdjust="spacingAndGlyphs" >102.6</text>
<text x="708.2" y="576.4" font-family="Liberation Sans, sans-serif" font-size="19.6" font-weight="normal" fill="#111" stroke="#111" stroke-width="0.2" textLength="58.8" lengthAdjust="spacingAndGlyphs" >108.7</text>
<text x="876.8" y="512.2" font-family="Liberation Sans, sans-serif" font-size="19.6" font-weight="normal" fill="#111" stroke="#111" stroke-width="0.2" textLength="26.2" lengthAdjust="spacingAndGlyphs" >64</text>
<text x="876.8" y="576.4" font-family="Liberation Sans, sans-serif" font-size="19.6" font-weight="normal" fill="#111" stroke="#111" stroke-width="0.2" textLength="26.2" lengthAdjust="spacingAndGlyphs" >64</text>
<text x="986.6" y="512.2" font-family="Liberation Sans, sans-serif" font-size="19.6" font-weight="normal" fill="#111" stroke="#111" stroke-width="0.2" textLength="52.4" lengthAdjust="spacingAndGlyphs" >4500</text>
<text x="986.6" y="576.4" font-family="Liberation Sans, sans-serif" font-size="19.6" font-weight="normal" fill="#111" stroke="#111" stroke-width="0.2" textLength="52.4" lengthAdjust="spacingAndGlyphs" >4500</text>
<text x="689.0" y="546.4" font-family="Liberation Sans, sans-serif" font-size="18.6" font-weight="normal" fill="#111" stroke="#111" stroke-width="0.2" textLength="32.0" lengthAdjust="spacingAndGlyphs" >Hp</text>
<text x="820.5" y="546.4" font-family="Liberation Sans, sans-serif" font-size="18.6" font-weight="normal" fill="#111" stroke="#111" stroke-width="0.2" textLength="44.8" lengthAdjust="spacingAndGlyphs" >mph</text>
<text x="955.0" y="546.4" font-family="Liberation Sans, sans-serif" font-size="18.6" font-weight="normal" fill="#111" stroke="#111" stroke-width="0.2" textLength="40.5" lengthAdjust="spacingAndGlyphs" >rpm</text>
<text x="1074.5" y="513.5" font-family="Liberation Sans, sans-serif" font-size="23.4" font-weight="normal" fill="#1a1acc" stroke="#1a1acc" stroke-width="0.2" textLength="45.7" lengthAdjust="spacingAndGlyphs" >ratio</text>
<text x="1074.5" y="544.6" font-family="Liberation Sans, sans-serif" font-size="23.4" font-weight="normal" fill="#1a1acc" stroke="#1a1acc" stroke-width="0.2" textLength="25.5" lengthAdjust="spacingAndGlyphs" >tcf</text>
<text x="1074.5" y="577.5" font-family="Liberation Sans, sans-serif" font-size="23.4" font-weight="normal" fill="#1a1acc" stroke="#1a1acc" stroke-width="0.2" textLength="45.0" lengthAdjust="spacingAndGlyphs" >gain</text>
<text x="1200.1" y="512.1" font-family="Liberation Sans, sans-serif" font-size="17.9" font-weight="normal" fill="#f4f4ff" stroke="#f4f4ff" stroke-width="0.2" textLength="57.9" lengthAdjust="spacingAndGlyphs" >5.542</text>
<text x="1213.0" y="543.6" font-family="Liberation Sans, sans-serif" font-size="17.9" font-weight="normal" fill="#f4f4ff" stroke="#f4f4ff" stroke-width="0.2" textLength="45.0" lengthAdjust="spacingAndGlyphs" >1.00</text>
<text x="1225.9" y="576.3" font-family="Liberation Sans, sans-serif" font-size="17.9" font-weight="normal" fill="#f4f4ff" stroke="#f4f4ff" stroke-width="0.2" textLength="32.1" lengthAdjust="spacingAndGlyphs" >6.2</text>
<path d="M38.7,601.6 L65.6,601.6 L58.2,618 L79.3,618 L86.7,601.6 L113.2,601.6 L94,645.8 L66.8,645.8 L75.8,625.6 L54.8,625.6 L45.7,645.8 L18.75,645.8 Z" fill="#111" stroke="#111" stroke-width="0.8" stroke-linejoin="round"/>
<path d="M118.4,601.6 L182.8,601.9 C189,602.5 190,606 188.8,609.2 C187,616 184.5,620.3 180,623 C176,625 170,625.5 167.3,625.5 L138.2,625.5 L142.6,617.7 L155.5,617.7 C158.5,617.7 160.6,615.5 160.6,612.8 C160.6,610.5 159,608.9 156.5,608.9 L140.9,608.9 L124.4,645.7 L97.7,645.7 Z" fill="#111" fill-rule="evenodd" stroke="#111" stroke-width="0.8" stroke-linejoin="round"/>
<path d="M13.5,660.2 L229.4,660.2 C240,660.2 247,659.5 251,657.5 C258,654 262,650 263,645.5 C264.5,640 262,635 257,630.6 L233.3,611.8 L274.8,611.3 L278.8,602 L212.6,602 C203,602.5 197,604.5 194.8,607.9 C190,613 189,617 189.9,620.7 C190.5,625 192,628 194.8,630.6 L220.5,650.4 L18.5,650.4 C16,650.4 15,651.5 14.2,653 L12.2,658 C11.8,659.5 12.5,660.2 13.5,660.2 Z" fill="#ec1c24" stroke="#161616" stroke-width="1.8" stroke-linejoin="round"/>
<text x="287.5" y="625.2" font-family="Liberation Sans, sans-serif" font-weight="bold" font-style="italic" font-size="28.5" fill="#fff" stroke="#111" stroke-width="4.4" stroke-linejoin="round" paint-order="stroke" textLength="186" lengthAdjust="spacingAndGlyphs">PERFORMANCE</text>
<text x="287.5" y="657.9" font-family="Liberation Sans, sans-serif" font-weight="bold" font-style="italic" font-size="28.5" fill="#fff" stroke="#111" stroke-width="4.4" stroke-linejoin="round" paint-order="stroke" textLength="134" lengthAdjust="spacingAndGlyphs">PRODUCTS</text>
<text x="514" y="615.7" font-family="Liberation Sans, sans-serif" font-weight="bold" font-size="10" fill="#1a1a1a" stroke="#1a1a1a" stroke-width="0.25" textLength="47.8" lengthAdjust="spacingAndGlyphs">Folder</text>
<text x="514.5" y="634.2" font-family="Liberation Sans, sans-serif" font-weight="bold" font-size="10" fill="#1a1a1a" stroke="#1a1a1a" stroke-width="0.25" textLength="49.7" lengthAdjust="spacingAndGlyphs">Run ID</text>
<text x="528.6" y="654.8" font-family="Liberation Sans, sans-serif" font-weight="bold" font-size="10" fill="#1a1a1a" stroke="#1a1a1a" stroke-width="0.25" textLength="34.4" lengthAdjust="spacingAndGlyphs">Date</text>
<rect x="570.5" y="605.3" width="198" height="12.0" fill="#fff" stroke="#ececec" stroke-width="1"/>
<path d="M570.5,617.8 V605.3 H768.5" fill="none" stroke="#444" stroke-width="2"/>
<text x="572.8" y="615.3" font-family="Liberation Sans, sans-serif" font-size="11.3" fill="#1a1a1a" stroke="#1a1a1a" stroke-width="0.12" letter-spacing="0.6" textLength="167.3" lengthAdjust="spacingAndGlyphs" xml:space="preserve">hps 2014 accord 4cy</text>
<rect x="570.5" y="625.5" width="198" height="11.3" fill="#fff" stroke="#ececec" stroke-width="1"/>
<path d="M570.5,637.3 V625.5 H768.5" fill="none" stroke="#444" stroke-width="2"/>
<text x="572.8" y="634.8" font-family="Liberation Sans, sans-serif" font-size="11.3" fill="#1a1a1a" stroke="#1a1a1a" stroke-width="0.12" letter-spacing="0.6" textLength="105.8" lengthAdjust="spacingAndGlyphs" xml:space="preserve">CAI_RU4950</text>
<rect x="570.5" y="645.3" width="198" height="11.7" fill="#fff" stroke="#ececec" stroke-width="1"/>
<path d="M570.5,657.5 V645.3 H768.5" fill="none" stroke="#444" stroke-width="2"/>
<text x="572.8" y="655.0" font-family="Liberation Sans, sans-serif" font-size="11.3" fill="#1a1a1a" stroke="#1a1a1a" stroke-width="0.12" letter-spacing="0.6" textLength="181.3" lengthAdjust="spacingAndGlyphs" xml:space="preserve">26-Jan-2015  10:01:00</text>
<text x="815" y="642" font-family="Liberation Sans, sans-serif" font-weight="bold" font-style="italic" font-size="34" fill="#1f55c0" stroke="#1f55c0" stroke-width="3" stroke-linejoin="round" paint-order="stroke" textLength="222" lengthAdjust="spacingAndGlyphs">Dyna</text>
<text x="1029" y="641.5" font-family="Liberation Sans, sans-serif" font-weight="bold" font-style="italic" font-size="34" fill="#d0102a" stroke="#d0102a" stroke-width="3" stroke-linejoin="round" paint-order="stroke" textLength="210" lengthAdjust="spacingAndGlyphs">pack</text>
<text x="811" y="636" font-family="Liberation Sans, sans-serif" font-weight="bold" font-style="italic" font-size="34" fill="#fff" stroke="#fff" stroke-width="6.5" stroke-linejoin="round" paint-order="stroke" textLength="222" lengthAdjust="spacingAndGlyphs">Dyna</text>
<text x="1024" y="635.5" font-family="Liberation Sans, sans-serif" font-weight="bold" font-style="italic" font-size="34" fill="#fff" stroke="#fff" stroke-width="6.5" stroke-linejoin="round" paint-order="stroke" textLength="210" lengthAdjust="spacingAndGlyphs">pack</text>
<text x="811" y="636" font-family="Liberation Sans, sans-serif" font-weight="bold" font-style="italic" font-size="34" fill="#d0102a" stroke="#d0102a" stroke-width="3" stroke-linejoin="round" paint-order="stroke" textLength="222" lengthAdjust="spacingAndGlyphs">Dyna</text>
<text x="1024" y="635.5" font-family="Liberation Sans, sans-serif" font-weight="bold" font-style="italic" font-size="34" fill="#1f55c0" stroke="#1f55c0" stroke-width="3" stroke-linejoin="round" paint-order="stroke" textLength="210" lengthAdjust="spacingAndGlyphs">pack</text>
<text x="921.9" y="656.9" font-family="Liberation Sans, sans-serif" font-weight="bold" font-size="9.4" letter-spacing="3" fill="#1c3aa8" stroke="#1c3aa8" stroke-width="0.7" textLength="96" lengthAdjust="spacingAndGlyphs">CHASSIS</text>
<text x="1061.6" y="656.9" font-family="Liberation Sans, sans-serif" font-weight="bold" font-size="9.4" letter-spacing="3" fill="#1c3aa8" stroke="#1c3aa8" stroke-width="0.7" textLength="182" lengthAdjust="spacingAndGlyphs">DYNAMOMETERS</text>
</svg>
</body></html>
